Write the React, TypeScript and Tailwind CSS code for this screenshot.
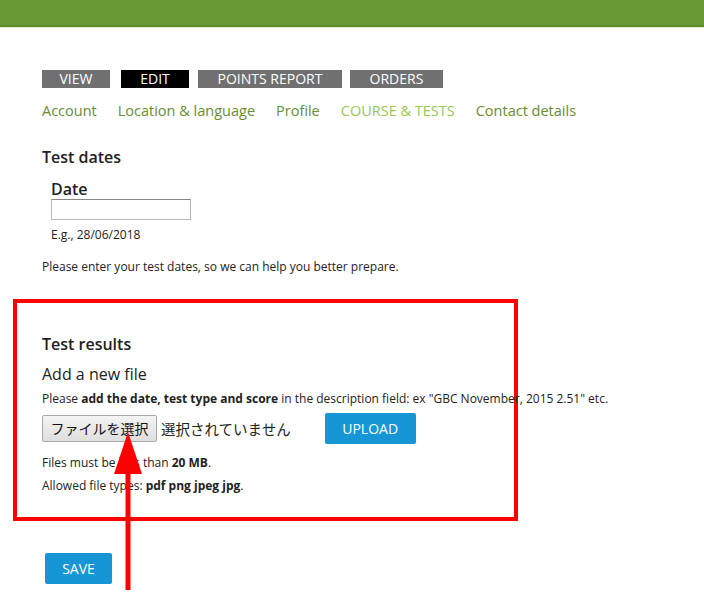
import { ReactNode } from "react"

const topTabs = [
    { label: "VIEW", w: "w-[68px]", active: false },
    { label: "EDIT", w: "w-[68px]", active: true },
    { label: "POINTS REPORT", w: "w-[144px]", active: false },
    { label: "ORDERS", w: "w-[93px]", active: false },
]

const subTabs = [
    { label: "Account", active: false },
    { label: "Location & language", active: false },
    { label: "Profile", active: false },
    { label: "COURSE & TESTS", active: true },
    { label: "Contact details", active: false },
]

function BlueButton({ children, className }: { children: ReactNode, className: string }) {
    return (
        <button type="button" className={`bg-[#1796d5] text-white text-[14px] rounded-[2px] flex items-center justify-center ${className}`}>
            {children}
        </button>
    )
}

export default function App() {
    return (
        <div className="relative w-[704px] h-[605px] bg-white overflow-hidden text-[#222] font-['Open_Sans',sans-serif]">
            {/* header band */}
            <div className="h-[25px] bg-[#689a34]" />
            <div className="h-[2px] bg-[#5b8c2a]" />
            <div className="h-px bg-[#dfe8d4]" />

            <div className="pl-[42px] pt-[42px]">
                <div className="flex h-[18px]">
                    {topTabs.map((t, i) => (
                        <div
                            key={t.label}
                            className={`${t.w} ${t.active ? "bg-black" : "bg-[#707070]"} ${i === 0 ? "" : i === 1 ? "ml-[11px]" : i === 2 ? "ml-[9px]" : "ml-[8px]"} text-white text-[14px] leading-[18px] flex items-center justify-center`}
                        >
                            {t.label}
                        </div>
                    ))}
                </div>

                <div className="flex gap-[21px] mt-[11px] text-[14.5px] leading-[24px]">
                    {subTabs.map(t => (
                        <span key={t.label} className={t.active ? "text-[#9bc653]" : "text-[#6a8c33]"}>{t.label}</span>
                    ))}
                </div>

                <h2 className="mt-[23px] text-[16px] leading-[22px] font-semibold">Test dates</h2>
                <div className="pl-[9px] mt-[11px]">
                    <div className="text-[16px] leading-[20px] font-semibold">Date</div>
                    <input className="block w-[140px] h-[21px] border border-[#b8b8b8] border-t-[#888]" />
                    <div className="text-[12px] leading-[18px] mt-[6px]">E.g., 28/06/2018</div>
                </div>
                <p className="text-[12px] leading-[18px] mt-[14px]">Please enter your test dates, so we can help you better prepare.</p>
            </div>

            <div className="ml-[13px] mt-[23px] w-[505px] h-[222px] border-[4px] border-[#ff0000] pl-[25px] pt-[30px]">
                <h2 className="text-[16px] leading-[22px] font-semibold">Test results</h2>
                <h3 className="mt-[8px] text-[16px] leading-[22px] font-medium">Add a new file</h3>
                <p className="text-[12px] leading-[18px] mt-[5px] whitespace-nowrap">
                    Please <b>add the date, test type and score</b> in the description field: ex "GBC November, 2015 2.51" etc.
                </p>
                <div className="flex items-center mt-[5px] h-[31px]">
                    <button type="button" className="h-[27px] w-[115px] border border-[#a8a8a8] rounded-[2px] bg-gradient-to-b from-[#f4f4f4] to-[#dedede] text-[14px] text-[#111] font-['Noto_Sans_CJK_JP',sans-serif]">
                        ファイルを選択
                    </button>
                    <span className="ml-[4px] text-[14.5px] font-['Noto_Sans_CJK_JP',sans-serif]">選択されていません</span>
                    <BlueButton className="ml-[34px] w-[91px] h-[31px]">UPLOAD</BlueButton>
                </div>
                <p className="text-[12px] leading-[18px] mt-[10px]">Files must be less than <b>20 MB</b>.</p>
                <p className="text-[12px] leading-[18px] mt-[5px]">Allowed file types: <b>pdf png jpeg jpg</b>.</p>
            </div>

            <div className="pl-[45px] mt-[32px]">
                <BlueButton className="w-[67px] h-[31px]">SAVE</BlueButton>
            </div>

            {/* annotation arrow */}
            <svg className="absolute left-0 top-0 pointer-events-none" width="704" height="605">
                <rect x="125.5" y="470" width="5" height="120" fill="#ff0000" />
                <polygon points="128,432 114,474 142,474" fill="#ff0000" />
            </svg>
        </div>
    )
}
